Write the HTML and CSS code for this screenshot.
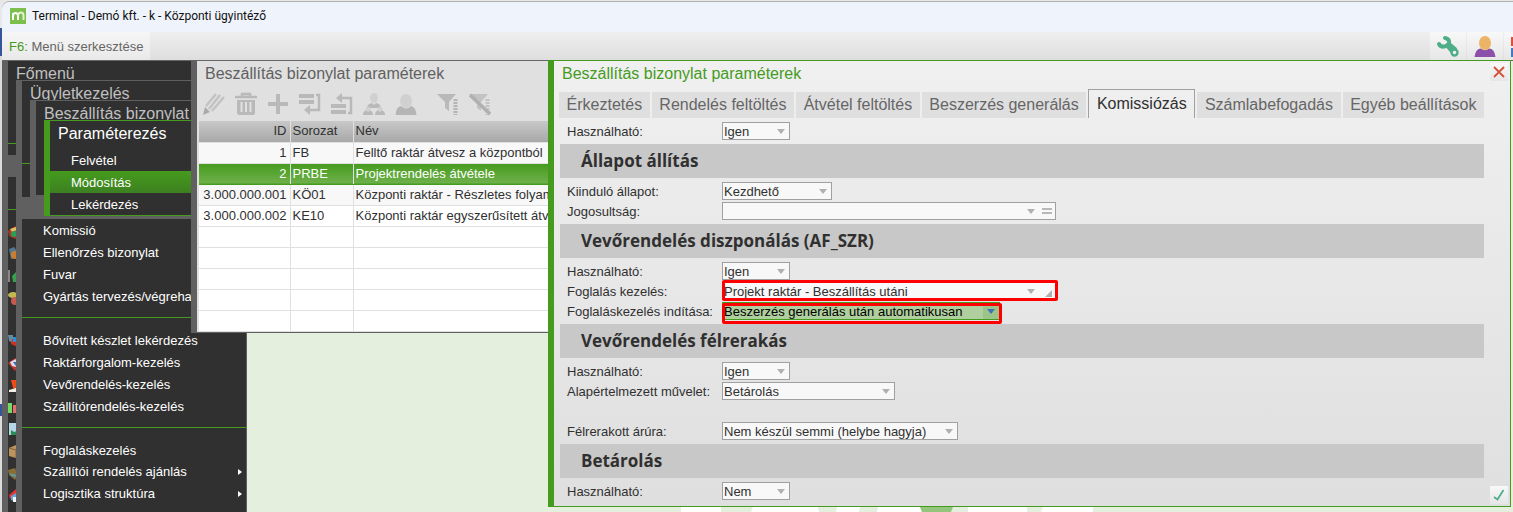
FILE: index.html
```html
<!DOCTYPE html>
<html lang="hu">
<head>
  <meta charset="utf-8">
  <meta name="viewport" content="width=device-width, initial-scale=1.0">
  <title>Terminal</title>
  <link rel="stylesheet" href="styles.css">
</head>
<body>
  <div class="app">
    <header class="titlebar">
      <svg class="logo" width="16" height="16" viewBox="0 0 16 16"><rect width="16" height="16" fill="#7cbf4c"/><path d="M3 12V5M3 7.500Q3.500 5 5.500 5T8 7.500V12" fill="none" stroke="#fff" stroke-width="2"/><path d="M8 7.500Q8.500 4.500 11 4.500T13.500 7.500V12" fill="none" stroke="#e2f2d6" stroke-width="2"/></svg>
      <span>Terminal - Demó kft. - k - Központi ügyintéző</span>
    </header>

    <nav class="toolbar">
      <button class="menu-edit"><span class="key">F6:</span> Menü szerkesztése</button>
      <div class="tools">
        <button class="tool" aria-label="Beállítások">
          <svg width="24" height="24" viewBox="0 0 24 24"><path d="M9 4Q14 5 13 10L19 15" fill="none" stroke="#4fae88" stroke-width="4" stroke-linecap="round"/><path d="M3 10Q5 14 10 12L13 10" fill="none" stroke="#4fae88" stroke-width="4" stroke-linecap="round"/><path d="M11 10L18 18" stroke="#4fae88" stroke-width="6"/><circle cx="18.500" cy="18.500" r="3" fill="#e8f2ee" stroke="#4fae88" stroke-width="2.400"/></svg>
        </button>
        <button class="tool" aria-label="Felhasználó">
          <svg width="24" height="24" viewBox="0 0 24 24"><path d="M1.500 23Q2.500 14.500 8 14.500Q12 18 16 14.500Q21.500 14.500 22.500 23Z" fill="#8c50aa"/><ellipse cx="12" cy="9" rx="6" ry="7" fill="#ebb467"/></svg>
        </button>
        <button class="tool tool-last" aria-label="Ablakok">
          <svg width="24" height="24" viewBox="0 0 24 24"><path d="M0 3H10V12H0Z" fill="#dc4f38"/><path d="M0 14H10V23H0Z" fill="#3b7dc0"/></svg>
        </button>
      </div>
    </nav>

    <main class="workspace">
      <svg class="wallpaper" width="600" height="5" viewBox="0 0 600 5"><path d="M0 0H40V5H0ZM72 0H137L138 5H70ZM156 0H179L178 5H155ZM197 0H239L241 5H196ZM287 0H346V5H287ZM362 0H412V5H360Z" fill="#fff"/><path d="M239 0H272L270 5H241Z" fill="#93c57c"/></svg>

      <section class="menu menu-main">
        <h2>Főmenü</h2>
        <ul>
          <li></li>
          <li></li>
          <li class="separator"></li>
          <li class="open"></li>
          <li></li>
          <li class="separator"></li>
          <li><svg width="16" height="16" viewBox="0 0 16 16"><path d="M0 7L7 2L14 7V12L7 15L1 12Z" fill="#a83426"/><path d="M2 5L8 3L9 6L4 8Z" fill="#e0c060"/><circle cx="6" cy="10" r="3" fill="#29a058"/></svg></li>
          <li><svg width="16" height="16" viewBox="0 0 16 16"><path d="M1 3L6 1L9 5L7 12L3 13Z" fill="#507890"/><circle cx="7" cy="9" r="4" fill="#cb7e30"/></svg></li>
          <li><svg width="16" height="16" viewBox="0 0 16 16"><path d="M0 2H2V14H0Z" fill="#888"/><path d="M4 8L8 4V14H5Z" fill="#36a04c"/></svg></li>
          <li><svg width="16" height="16" viewBox="0 0 16 16"><ellipse cx="5" cy="5" rx="5" ry="3" fill="#c1b950"/><circle cx="7" cy="11" r="4" fill="#c65a50"/></svg></li>
          <li></li>
          <li><svg width="16" height="16" viewBox="0 0 16 16"><path d="M0 1H5V9L1 7Z" fill="#668aa0"/><path d="M4 5H12V14L3 10Z" fill="#d33023"/><path d="M5 3H8V8H5Z" fill="#2692dc"/></svg></li>
          <li><svg width="16" height="16" viewBox="0 0 16 16"><path d="M0 7L7 2L12 7L7 15Z" fill="#c53530"/><path d="M2 6L8 3V11L4 10Z" fill="#d8dbe8"/><path d="M5 6H8V10Z" fill="#4a66a6"/></svg></li>
          <li><svg width="16" height="16" viewBox="0 0 16 16"><path d="M3 2H8V12L5 10Z" fill="#f04a15"/><path d="M1 12L8 10V14H1Z" fill="#f4eee5"/></svg></li>
          <li><svg width="16" height="16" viewBox="0 0 16 16"><path d="M0 3H4V13H0Z" fill="#72dc63"/><path d="M5 5H8V13H5Z" fill="#e66d6d"/></svg></li>
          <li><svg width="16" height="16" viewBox="0 0 16 16"><path d="M1 1H12V13H1Z" fill="#b6d7e7"/><path d="M3 8L6 10L12 8V13H3Z" fill="#268e52"/></svg></li>
          <li><svg width="16" height="16" viewBox="0 0 16 16"><path d="M1 4L8 1V14L1 12Z" fill="#bd9460"/><path d="M1 4L8 6V14" fill="none" stroke="#80633c"/></svg></li>
          <li><svg width="16" height="16" viewBox="0 0 16 16"><path d="M0 4L7 2L10 9L7 14L1 9Z" fill="#876d37"/><path d="M2 7L8 9V11L3 10Z" fill="#5c9ba0"/></svg></li>
          <li><svg width="16" height="16" viewBox="0 0 16 16"><path d="M1 7L8 1V6L2 11Z" fill="#e53333"/><path d="M3 8L8 5V14L3 12Z" fill="#65a5db"/><path d="M5 9H8V14H5Z" fill="#f4f8ff"/></svg></li>
        </ul>
      </section>

      <section class="menu menu-deals">
        <h2>Ügyletkezelés</h2>
        <ul>
          <li></li>
          <li></li>
          <li class="separator"></li>
          <li></li>
          <li class="open"></li>
          <li><a href="#">Komissió</a></li>
          <li><a href="#">Ellenőrzés bizonylat</a></li>
          <li><a href="#">Fuvar</a></li>
          <li><a href="#">Gyártás tervezés/végrehajtás</a></li>
          <li class="separator"></li>
          <li><a href="#">Bővített készlet lekérdezés</a></li>
          <li><a href="#">Raktárforgalom-kezelés</a></li>
          <li><a href="#">Vevőrendelés-kezelés</a></li>
          <li><a href="#">Szállítórendelés-kezelés</a></li>
          <li class="separator"></li>
          <li><a href="#">Foglaláskezelés</a></li>
          <li class="more"><a href="#">Szállítói rendelés ajánlás</a></li>
          <li class="more"><a href="#">Logisztika struktúra</a></li>
        </ul>
      </section>

      <section class="menu menu-delivery">
        <h2>Beszállítás bizonylat</h2>
      </section>

      <section class="menu menu-params">
        <h2>Paraméterezés</h2>
        <ul>
          <li><a href="#">Felvétel</a></li>
          <li class="current"><a href="#">Módosítás</a></li>
          <li><a href="#">Lekérdezés</a></li>
        </ul>
      </section>

      <section class="list-window">
        <h2>Beszállítás bizonylat paraméterek</h2>
        <div class="list-tools">
          <button aria-label="Módosítás"><svg width="24" height="24" viewBox="0 0 24 24"><path d="M1 23L3 15L8 20Z" fill="#a9a9a9"/><path d="M4 14L14 2M7 17L18 3M10 19L22 5" fill="none" stroke="#c3c3c3" stroke-width="2.500"/></svg></button>
          <button aria-label="Törlés"><svg width="24" height="24" viewBox="0 0 24 24"><path d="M8 4V2H16V4M1 5H23" fill="none" stroke="#b9b9b9" stroke-width="2.500"/><path d="M3 8H21V21Q21 23 19 23H5Q3 23 3 21Z" fill="#b9b9b9"/><path d="M7.500 10V20M12 10V20M16.500 10V20" stroke="#e0e0e0" stroke-width="2"/></svg></button>
          <button aria-label="Új"><svg width="24" height="24" viewBox="0 0 24 24"><path d="M12 2V22M2 12H22" stroke="#b9b9b9" stroke-width="4"/></svg></button>
          <button aria-label="Beszúrás alá"><svg width="24" height="24" viewBox="0 0 24 24"><path d="M1 2H16V6H1ZM1 8H16V12H1Z" fill="#b9b9b9"/><path d="M18 3H21V18H11" fill="none" stroke="#b9b9b9" stroke-width="2.500"/><path d="M12 13V23L6 18Z" fill="#b9b9b9"/></svg></button>
          <button aria-label="Beszúrás fölé"><svg width="24" height="24" viewBox="0 0 24 24"><path d="M1 12H16V16H1ZM1 18H16V22H1Z" fill="#b9b9b9"/><path d="M18 21H21V6H12" fill="none" stroke="#b9b9b9" stroke-width="2.500"/><path d="M12 1V11L6 6Z" fill="#b9b9b9"/></svg></button>
          <button aria-label="Csoport"><svg width="24" height="24" viewBox="0 0 24 24"><ellipse cx="12" cy="6" rx="4" ry="5" fill="#d0d0d0"/><path d="M5 16Q5 12 10 11L12 13L14 11Q19 12 19 16Z" fill="#b9b9b9"/><circle cx="6" cy="17" r="2.500" fill="#d0d0d0"/><circle cx="18" cy="17" r="2.500" fill="#d0d0d0"/><path d="M1 23Q1 19 4 18.500L6 20L8 18.500Q11 19 11 23ZM13 23Q13 19 16 18.500L18 20L20 18.500Q23 19 23 23Z" fill="#b9b9b9"/></svg></button>
          <button aria-label="Személy"><svg width="24" height="24" viewBox="0 0 24 24"><ellipse cx="12" cy="9" rx="6" ry="7" fill="#d0d0d0"/><path d="M1.500 23Q2 15 7 14Q12 19 17 14Q22 15 22.500 23Z" fill="#b5b5b5"/></svg></button>
          <button class="filter" aria-label="Szűrő"><svg width="24" height="24" viewBox="0 0 24 24"><path d="M1 2H20L13 10V19L9 16V10Z" fill="#b9b9b9"/><path d="M19.500 7V23" stroke="#b5b5b5" stroke-width="4" stroke-dasharray="2 1"/></svg></button>
          <button aria-label="Szűrő törlése"><svg width="24" height="24" viewBox="0 0 24 24"><path d="M1 2H20L13 10V19L9 16V10Z" fill="#c3c3c3"/><path d="M19.500 7V23" stroke="#c3c3c3" stroke-width="4" stroke-dasharray="2 1"/><path d="M2 3L22 22" stroke="#b0b0b0" stroke-width="3.500"/></svg></button>
        </div>
        <table class="list">
          <thead>
            <tr><th class="id">ID</th><th class="series">Sorozat</th><th>Név</th></tr>
          </thead>
          <tbody>
            <tr class="shade"><td class="id">1</td><td>FB</td><td>Felltő raktár átvesz a központból</td></tr>
            <tr class="selected"><td class="id">2</td><td>PRBE</td><td>Projektrendelés átvétele</td></tr>
            <tr class="shade"><td class="id">3.000.000.001</td><td>KÖ01</td><td>Központi raktár - Részletes folyamat</td></tr>
            <tr><td class="id">3.000.000.002</td><td>KE10</td><td>Központi raktár egyszerűsített átvétel</td></tr>
            <tr><td></td><td></td><td></td></tr>
            <tr><td></td><td></td><td></td></tr>
            <tr><td></td><td></td><td></td></tr>
            <tr><td></td><td></td><td></td></tr>
            <tr><td></td><td></td><td></td></tr>
          </tbody>
        </table>
      </section>

      <section class="editor">
        <div class="editor-body">
          <h2>Beszállítás bizonylat paraméterek</h2>
          <div class="tabs">
            <button>Érkeztetés</button>
            <button>Rendelés feltöltés</button>
            <button>Átvétel feltöltés</button>
            <button>Beszerzés generálás</button>
            <button class="active">Komissiózás</button>
            <button>Számlabefogadás</button>
            <button>Egyéb beállítások</button>
          </div>

          <form>
            <div class="row">
              <label for="usable">Használható:</label>
              <span class="select w-short"><select id="usable"><option>Igen</option></select></span>
            </div>

            <h3>Állapot állítás</h3>
            <div class="row">
              <label for="state">Kiinduló állapot:</label>
              <span class="select w-medium"><select id="state"><option>Kezdhető</option></select></span>
            </div>
            <div class="row">
              <label for="rights">Jogosultság:</label>
              <span class="select w-wide lookup"><select id="rights"><option></option></select><i class="equals"></i></span>
            </div>

            <h3>Vevőrendelés diszponálás (AF_SZR)</h3>
            <div class="row">
              <label for="dispUsable">Használható:</label>
              <span class="select w-short"><select id="dispUsable"><option>Igen</option></select></span>
            </div>
            <div class="row">
              <label for="booking">Foglalás kezelés:</label>
              <span class="select w-wide lookup marked"><select id="booking"><option>Projekt raktár - Beszállítás utáni</option></select><i class="corner"></i></span>
            </div>
            <div class="row">
              <label for="bookingStart">Foglaláskezelés indítása:</label>
              <span class="select w-start marked focused"><select id="bookingStart"><option>Beszerzés generálás után automatikusan</option></select></span>
            </div>

            <h3>Vevőrendelés félrerakás</h3>
            <div class="row">
              <label for="asideUsable">Használható:</label>
              <span class="select w-short"><select id="asideUsable"><option>Igen</option></select></span>
            </div>
            <div class="row">
              <label for="operation">Alapértelmezett művelet:</label>
              <span class="select w-operation"><select id="operation"><option>Betárolás</option></select></span>
            </div>
            <div class="row"></div>
            <div class="row">
              <label for="goods">Félrerakott árúra:</label>
              <span class="select w-goods"><select id="goods"><option>Nem készül semmi (helybe hagyja)</option></select></span>
            </div>

            <h3>Betárolás</h3>
            <div class="row">
              <label for="storeUsable">Használható:</label>
              <span class="select w-short"><select id="storeUsable"><option>Nem</option></select></span>
            </div>
          </form>
        </div>

        <div class="editor-side">
          <button aria-label="Bezárás"><svg width="18" height="18" viewBox="0 0 18 18"><path d="M4 4L14 14M14 4L4 14" stroke="#d2523a" stroke-width="1.800"/></svg></button>
          <button aria-label="Rendben"><svg width="18" height="18" viewBox="0 0 18 18"><path d="M4 11L7.500 13.500L13.500 4" fill="none" stroke="#4fae88" stroke-width="1.800"/></svg></button>
        </div>
      </section>
    </main>
  </div>
</body>
</html>
```
FILE: styles.css
```css
* {
  box-sizing: border-box;
  margin: 0;
  padding: 0;
}

body {
  height: 100vh;
  padding: 2px 0 0 2px;
  overflow: hidden;
  background: linear-gradient(#e8e8e8 0 28px, #35559c 28px 56px, #dcdcdc 56px 404px, #35559c 404px 416px, #dcdcdc 416px);
  font-family: "Liberation Sans", Arial, sans-serif;
  font-size: 13px;
  color: #303030;
}

button,
select {
  border: none;
  border-radius: 0;
  background: none;
  font: inherit;
  color: inherit;
}

h2 {
  font-size: 16px;
  font-weight: normal;
  white-space: nowrap;
}

ul {
  list-style: none;
}

a {
  color: inherit;
  text-decoration: none;
}

svg {
  display: block;
}

.app {
  display: flex;
  flex-direction: column;
  height: 100%;
  border-top-left-radius: 8px;
  overflow: hidden;
  box-shadow: 0 -1px 0 #b0b0b0;
}

/* Title bar and toolbar */
.titlebar {
  display: flex;
  align-items: center;
  gap: 6px;
  height: 30px;
  padding: 0 8px 2px;
  background: #eff3fb;
  font-family: Roboto, "Open Sans", sans-serif;
  font-size: 12px;
  color: #111;
}

.toolbar {
  display: flex;
  justify-content: space-between;
  height: 29px;
  border-bottom: 1px solid #666;
  background: linear-gradient(#efefef, #dedede);
}

.menu-edit {
  padding: 0 7px;
  background: linear-gradient(#f6f6f6, #e9e9e9);
  color: #666;
}

.menu-edit .key {
  color: #459b1d;
}

.tools {
  display: flex;
  gap: 1px;
}

.tool {
  display: flex;
  align-items: center;
  justify-content: center;
  width: 36px;
  background: linear-gradient(#f8f8f8, #e6e6e6);
}

.tool-last {
  justify-content: flex-start;
  width: 9px;
  padding-left: 7px;
  overflow: hidden;
}

.tool svg {
  flex: none;
}

/* Windows on the desktop */
.workspace {
  position: relative;
  flex: 1;
  background: #e4efdd;
}

.wallpaper {
  position: absolute;
  left: 679px;
  bottom: 0;
}

.menu {
  position: absolute;
  overflow: hidden;
  border-left: 6px solid #606060;
  background: #303030;
  color: #fff;
}

.menu h2 {
  height: 28px;
  padding-left: 8px;
  line-height: 25px;
  color: #c0c0c0;
}

.menu li {
  height: 22px;
  line-height: 24px;
  white-space: nowrap;
}

.menu .separator {
  background: linear-gradient(#459b1d, #459b1d) 0 10px / 100% 1px no-repeat;
}

.menu .open {
  background: #606060;
}

.menu-main {
  top: 0;
  bottom: 0;
  left: 0;
  width: 200px;
}

.menu-main li {
  padding-top: 3px;
}

.menu-deals {
  top: 19px;
  bottom: 0;
  left: 14px;
  width: 231px;
  border-top: 1px solid #606060;
  border-right: 1px solid #606060;
}

.menu-deals li {
  padding-left: 21px;
}

.menu-deals .more {
  display: flex;
  align-items: center;
  justify-content: space-between;
  padding-right: 4px;
}

.more::after {
  content: "";
  border: 3px solid transparent;
  border-left: 4px solid #fff;
  border-right: none;
}

.menu-delivery {
  top: 39px;
  left: 28px;
  width: 170px;
  height: 97px;
  border-top: 1px solid #606060;
  border-bottom: 2px solid #606060;
}

.menu-params {
  top: 59px;
  left: 42px;
  width: 150px;
  border: solid #459b1d;
  border-width: 1px 0 1px 6px;
}

.menu-params h2 {
  color: #fff;
}

.menu-params li {
  padding-left: 21px;
}

.menu-params .current {
  background: linear-gradient(#459b1d, #3d8021);
}

/* Record list */
.list-window {
  position: absolute;
  top: 0;
  left: 189px;
  width: 410px;
  padding: 0 2px;
  border-left: 6px solid #606060;
  border-bottom: 1px solid #606060;
  background: #e0e0e0;
}

.list-window h2 {
  padding-left: 6px;
  line-height: 25px;
  color: #606060;
}

.list-tools {
  display: flex;
  gap: 8px;
  height: 35px;
  padding: 6px 3px;
}

.list-tools button {
  width: 24px;
  height: 24px;
}

.list-tools .filter {
  margin-left: 10px;
}

.list {
  width: 100%;
  border-collapse: collapse;
  table-layout: fixed;
}

.list th,
.list td {
  height: 21px;
  padding: 0 2px;
  border-right: 1px solid #e0e0e0;
  border-bottom: 1px solid #e0e0e0;
  background: #fff;
  font-weight: normal;
  line-height: 20px;
  text-align: left;
  white-space: nowrap;
  overflow: hidden;
}

.list th {
  background: linear-gradient(#c8c8c8, #a8a8a8);
}

.list .id {
  width: 91px;
  padding-right: 3px;
  text-align: right;
}

.list .series {
  width: 63px;
}

.list .shade td {
  background: #f8f8f8;
}

.list .selected td {
  background: linear-gradient(#459b1d, #6fb04c);
  border-bottom-color: #459b1d;
  color: #fff;
}

/* Parameter editor */
.editor {
  position: absolute;
  top: -1px;
  right: 2px;
  bottom: 5px;
  left: 546px;
  display: flex;
  gap: 6px;
  padding: 2px 2px 2px 5px;
  border: 1px solid #459b1d;
  border-left-width: 6px;
  background: linear-gradient(#f0f0f0, #dfdfdf);
}

.editor-body {
  flex: 1;
}

.editor h2 {
  padding-left: 3px;
  line-height: 22px;
  color: #459b1d;
}

.editor-side {
  display: flex;
  flex-direction: column;
  justify-content: space-between;
}

.editor-side button {
  background: linear-gradient(#f8f8f8, #e6e6e6);
}

.tabs {
  display: flex;
  align-items: flex-end;
  gap: 2px;
  height: 33px;
}

.tabs button {
  flex: auto;
  height: 26px;
  background: #dfdfdf;
  font-size: 16px;
  color: #666;
}

.tabs .active {
  height: 29px;
  border: 1px solid #a0a0a0;
  border-bottom: none;
  background: none;
  color: #303030;
}

form {
  padding: 3px 0 0 1px;
}

.row {
  display: flex;
  align-items: center;
  height: 20px;
}

.row label {
  width: 162px;
  padding-left: 7px;
  white-space: nowrap;
}

form h3 {
  height: 34px;
  margin: 3px 0;
  padding-left: 21px;
  background: #c8c8c8;
  font-family: "Open Sans", "Noto Sans", sans-serif;
  font-size: 17px;
  font-weight: bold;
  line-height: 34px;
}

.select {
  position: relative;
  height: 18px;
}

.select select {
  display: block;
  width: 100%;
  height: 100%;
  padding: 0 1px;
  appearance: none;
  border: 1px solid #a0a0a0;
  background: #f8f8f8;
}

.select::before {
  content: "";
  position: absolute;
  top: 7px;
  right: 5px;
  border: 4px solid transparent;
  border-top: 5px solid #b0b0b0;
  border-bottom: none;
}

.lookup::before {
  right: 21px;
}

.equals {
  position: absolute;
  top: 6px;
  right: 4px;
  width: 10px;
  height: 6px;
  border: solid #b8b8b8;
  border-width: 2px 0;
}

.corner {
  position: absolute;
  right: 4px;
  bottom: 3px;
  border-bottom: 7px solid #b0b0b0;
  border-left: 7px solid transparent;
}

.w-short {
  width: 68px;
}

.w-medium {
  width: 110px;
}

.w-wide {
  width: 334px;
}

.w-start {
  width: 278px;
}

.w-operation {
  width: 173px;
}

.w-goods {
  width: 236px;
}

.focused select {
  border-color: #459b1d;
  background: linear-gradient(#9cc48a, #9cc48a) right / 16px 100% no-repeat #afcf9f;
  color: #000;
}

.focused::before {
  border-top-color: #3f73b5;
}

/* Red highlight frame round a field */
.marked::after {
  content: "";
  position: absolute;
  top: -2px;
  right: -2px;
  bottom: -1px;
  left: 0;
  border: 3px solid #f00;
  border-radius: 2px;
  pointer-events: none;
}

.focused::after {
  top: 1px;
  bottom: -4px;
}
```
